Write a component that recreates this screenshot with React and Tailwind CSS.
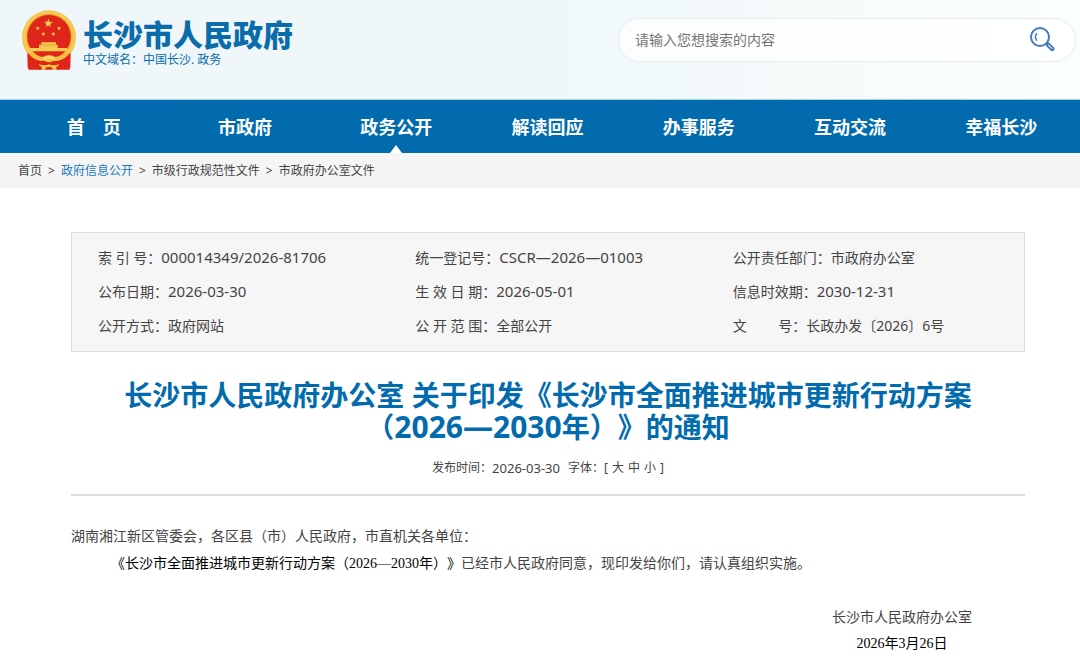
import React, { useState } from 'react';

const navItems = ['首　页', '市政府', '政务公开', '解读回应', '办事服务', '互动交流', '幸福长沙'];

const breadcrumbs = ['首页', '政府信息公开', '市级行政规范性文件', '市政府办公室文件'];

const infoItems = [
  { label: '索 引 号：', value: '000014349/2026-81706', numeric: true },
  { label: '统一登记号：', value: 'CSCR—2026—01003', numeric: true },
  { label: '公开责任部门：', value: '市政府办公室' },
  { label: '公布日期：', value: '2026-03-30', numeric: true },
  { label: '生 效 日 期：', value: '2026-05-01', numeric: true },
  { label: '信息时效期：', value: '2030-12-31', numeric: true },
  { label: '公开方式：', value: '政府网站' },
  { label: '公 开 范 围：', value: '全部公开' },
  { label: '文　　 号：', value: '长政办发〔2026〕6号' }
];

const Star = ({ x, y, size }) => (
  <path
    transform={`translate(${x} ${y}) scale(${size})`}
    d="M0 -10 L2.4 -3.2 L9.5 -3.1 L3.8 1.2 L5.9 8.1 L0 4 L-5.9 8.1 L-3.8 1.2 L-9.5 -3.1 L-2.4 -3.2 Z"
    fill="#f8d04a"
  />
);

const Emblem = () => (
  <svg className="h-[60px] w-14 shrink-0" viewBox="35 16 168 180" aria-hidden="true">
    {/* 齿轮和麦穗外圈 */}
    <circle cx="119" cy="98" r="81" fill="#f4c044" />
    <circle cx="119" cy="98" r="75" fill="none" stroke="#f8cd5c" strokeWidth="5" />
    <circle cx="119" cy="96" r="67" fill="#d98a22" />
    <circle cx="119" cy="96" r="65" fill="#e0261b" />
    <Star x={117} y={56} size={1.4} />
    <Star x={85} y={71} size={0.7} />
    <Star x={149} y={71} size={0.7} />
    <Star x={102} y={88} size={0.7} />
    <Star x={132} y={88} size={0.7} />
    {/* 天安门 */}
    <path d="M96 113h44v7h5v10h29v10H60v-10h29v-10h7z" fill="#f7cb50" />
    <path d="M96 120h44v2H96z" fill="#e0861f" />
    {/* 绶带 */}
    <path d="M54 145q18 10 34 14l12 36H58l-3-8z" fill="#df241a" />
    <path d="M184 145q-18 10-34 14l-12 36h42l3-8z" fill="#df241a" />
    <path d="M88 168h62v27H88z" fill="#df241a" />
    <path d="M58 147q20 11 44 9 17-10 34 0 24 2 44-9-12 16-34 21l-13 0q-14 9-28 0l-13 0q-22-5-34-21z" fill="#f4c044" />
    <path d="M104 158q15-8 30 0l6 6q-12 3-21-3-9 6-21 3z" fill="#fbd96a" />
    <path d="M88 178q16 7 31 1 15 6 31-1-3 8-10 10l3 7h-11l-6-8h-14l-6 8H95l3-7q-7-2-10-10z" fill="#f7c948" />
  </svg>
);

const SearchIcon = () => (
  <svg className="size-7" viewBox="0 0 28 28" fill="none" stroke="#4279bd" strokeLinecap="round">
    <circle cx="11" cy="11" r="9" strokeWidth="2" />
    <path d="M7.6 7.8q-2.4 3 0 6.4" strokeWidth="1.5" />
    <path d="M18 18l1.5 1.5" strokeWidth="1.5" />
    <path d="M19.2 18.8l4 4" strokeWidth="4.6" />
    <path d="M19.6 19.2l3.2 3.2" stroke="#c9daee" strokeWidth="1.3" />
  </svg>
);

const Header = () => {
  const [keyword, setKeyword] = useState('');

  return (
    <header className="flex items-start justify-between bg-linear-to-r from-[#f0f7fa] via-[#eff7f8] to-[#fbfefe] pt-[10px] pr-1 pb-[29px] pl-[21px]">
      <a href="#" className="flex gap-1.5 text-[#0a6cab]">
        <Emblem />
        <span className="flex flex-col pt-[9px]">
          <span className="text-[30px] leading-8 font-black">长沙市人民政府</span>
          <span className="text-xs leading-[18px]">中文域名：中国长沙. 政务</span>
        </span>
      </a>
      <form
        className="mt-2 flex h-11 w-[458px] items-center rounded-full border border-[#e6ecec] bg-white/80 pr-[18px] pl-4"
        onSubmit={(e) => e.preventDefault()}
      >
        <input
          type="text"
          aria-label="搜索"
          placeholder="请输入您想搜索的内容"
          value={keyword}
          onChange={(e) => setKeyword(e.target.value)}
          className="min-w-0 flex-1 text-sm text-[#444] outline-none placeholder:text-[#757575]"
        />
        <button type="submit" aria-label="搜索">
          <SearchIcon />
        </button>
      </form>
    </header>
  );
};

const Nav = () => (
  <nav className="border-t border-[#9fd0e6] bg-[#016bae] pr-[3px] pl-[18px]">
    <ul className="flex">
      {navItems.map((item) => (
        <li key={item} className="relative flex-1 text-center">
          <a href="#" className="block pt-px text-lg leading-[52px] font-bold text-white">
            {item}
          </a>
          {item === '政务公开' && (
            <svg className="absolute bottom-0 left-1/2 h-2 w-3 -translate-x-1/2" viewBox="0 0 12 8">
              <path d="M6 0l6 8H0z" fill="#fff" />
            </svg>
          )}
        </li>
      ))}
    </ul>
  </nav>
);

const Breadcrumb = () => (
  <div className="flex gap-1.5 bg-[#f5f5f5] px-[18px] text-xs leading-[35px] text-[#444]">
    {breadcrumbs.map((item, index) => (
      <React.Fragment key={item}>
        {index > 0 && <span>&gt;</span>}
        <a href="#" className={index === 1 ? 'text-[#1a7bb9]' : ''}>
          {item}
        </a>
      </React.Fragment>
    ))}
  </div>
);

const InfoBox = () => (
  <dl className="grid grid-cols-3 border border-[#ddd] bg-[#f6f6f6] py-2 text-sm text-[#444]">
    {infoItems.map((item) => (
      <div key={item.label} className="flex h-[34px] items-center pl-[26px] whitespace-pre">
        <dt>{item.label}</dt>
        <dd className={item.numeric ? 'text-[15px]' : ''}>{item.value}</dd>
      </div>
    ))}
  </dl>
);

const Article = () => {
  const [fontSize, setFontSize] = useState('中');

  return (
    <article>
      <h1 className="mt-7 text-center text-[28px] leading-[31px] font-bold text-[#016bae]">
        长沙市人民政府办公室 关于印发《长沙市全面推进城市更新行动方案
        <br />
        （<span className="text-[30px]">2026—2030</span>年）》的通知
      </h1>

      <div className="mt-[15px] flex items-center justify-center border-b-2 border-[#ddd] pb-4 text-xs leading-5 text-[#444]">
        <span>发布时间：</span>
        <time className="mr-2 text-[13px]">2026-03-30</time>
        <span>字体：</span>
        <span className="flex gap-1">
          <span>[</span>
          {['大', '中', '小'].map((size) => (
            <button key={size} type="button" aria-pressed={fontSize === size} onClick={() => setFontSize(size)}>
              {size}
            </button>
          ))}
          <span>]</span>
        </span>
      </div>

      <div className="pt-[26px] text-sm leading-[27px] text-[#444]">
        <p>湖南湘江新区管委会，各区县（市）人民政府，市直机关各单位：</p>
        <p className="indent-10">
          <span className="font-['Liberation_Serif','Noto_Sans_CJK_SC',serif] text-black">
            《长沙市全面推进城市更新行动方案（2026—2030年）》
          </span>
          已经市人民政府同意，现印发给你们，请认真组织实施。
        </p>
        <div className="mt-[26px] flex justify-end pr-[53px] text-center">
          <div>
            <p>长沙市人民政府办公室</p>
            <p className="font-['Liberation_Serif','Noto_Sans_CJK_SC',serif] text-black">2026年3月26日</p>
          </div>
        </div>
      </div>
    </article>
  );
};

const App = () => {
  return (
    <div
      lang="zh-CN"
      className="min-h-screen bg-white font-['Noto_Sans','Noto_Sans_CJK_SC',sans-serif] [text-spacing-trim:space-all]"
    >
      <Header />
      <Nav />
      <Breadcrumb />
      <main className="pt-11 pr-[55px] pb-3 pl-[71px]">
        <InfoBox />
        <Article />
      </main>
    </div>
  );
};

export default App;
